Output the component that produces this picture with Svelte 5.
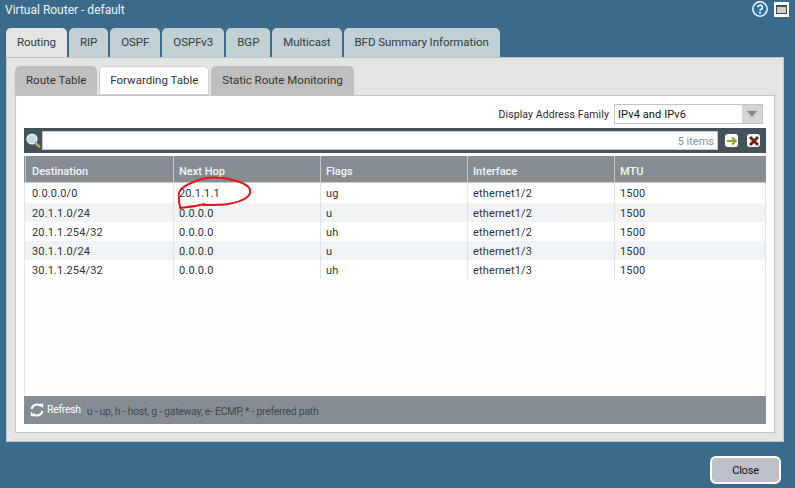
<script>
  const tabs = ['Routing', 'RIP', 'OSPF', 'OSPFv3', 'BGP', 'Multicast', 'BFD Summary Information'];
  const subtabs = ['Route Table', 'Forwarding Table', 'Static Route Monitoring'];
  const cols = ['Destination', 'Next Hop', 'Flags', 'Interface', 'MTU'];
  const rows = [
    ['0.0.0.0/0', '20.1.1.1', 'ug', 'ethernet1/2', '1500'],
    ['20.1.1.0/24', '0.0.0.0', 'u', 'ethernet1/2', '1500'],
    ['20.1.1.254/32', '0.0.0.0', 'uh', 'ethernet1/2', '1500'],
    ['30.1.1.0/24', '0.0.0.0', 'u', 'ethernet1/3', '1500'],
    ['30.1.1.254/32', '0.0.0.0', 'uh', 'ethernet1/3', '1500']
  ];
</script>

<div class="page">
  <header class="titlebar">
    <span class="title">Virtual Router - default</span>
    <div class="winicons">
      <svg width="16" height="16" viewBox="0 0 16 16">
        <circle cx="8" cy="8" r="7.2" fill="#2a6fb0" stroke="#fff" stroke-width="1.4"/>
        <path d="M5.8 6.3a2.3 2.1 0 1 1 3.4 1.8c-.8.5-1.2.8-1.2 1.7" fill="none" stroke="#fff" stroke-width="1.6"/>
        <rect x="7.1" y="10.8" width="1.8" height="1.8" fill="#fff"/>
      </svg>
      <svg width="15" height="15" viewBox="0 0 15 15">
        <rect width="15" height="15" fill="#fff"/>
        <rect x="2.5" y="3.5" width="10" height="8" fill="#c9ced2" stroke="#3f4d57"/>
        <rect x="2" y="3" width="11" height="2" fill="#3f4d57"/>
      </svg>
    </div>
  </header>

  <nav class="tabs">
    {#each tabs as t, i}
      <div class="tab" class:active={i === 0}>{t}</div>
    {/each}
  </nav>

  <section class="panel">
    <nav class="subtabs">
      {#each subtabs as t, i}
        <div class="subtab" class:active={i === 1}>{t}</div>
      {/each}
    </nav>
    <div class="content">
      <div class="family">
        <span>Display Address Family</span>
        <div class="select">
          <span class="selval">IPv4 and IPv6</span>
          <span class="selbtn"><i></i></span>
        </div>
      </div>

      <div class="tablewrap">
        <div class="toolbar">
          <svg class="search" width="15" height="16" viewBox="0 0 15 16">
            <circle cx="6" cy="6" r="4.8" fill="#bcdcf2" stroke="#e8f2f8" stroke-width="1.6"/>
            <path d="M9.6 9.8l3.6 3.8" stroke="#c9a46a" stroke-width="2.4" stroke-linecap="round"/>
          </svg>
          <div class="searchbox">5 items</div>
          <span class="toolbtn">
            <svg width="12" height="12" viewBox="0 0 12 12"><path d="M1 6h8M6 2.5L9.8 6 6 9.5" fill="none" stroke="#8fa524" stroke-width="2.2"/></svg>
          </span>
          <span class="toolbtn">
            <svg width="12" height="12" viewBox="0 0 12 12"><path d="M2 2l8 8M10 2l-8 8" stroke="#6e2a12" stroke-width="3"/></svg>
          </span>
        </div>

        <div class="thead">
          {#each cols as c}
            <div class="th">{c}</div>
          {/each}
        </div>

        <div class="tbody">
          {#each rows as r}
            <div class="tr">
              {#each r as cell}
                <div class="td">{cell}</div>
              {/each}
            </div>
          {/each}
          <svg class="scribble" width="76" height="36" viewBox="0 0 76 36">
            <path d="M2 32C1 27 0 22 1 18C2 14 5 12 9 10C15 7 21 4 29 3C38 2 47 3 55 5C63 7 71 10 72 15C73 19 71 21 68 23C62 27 56 28 50 29C44 30 35 30 27 30C24 31 27 29 27 29C20 31 10 32 2 33" fill="none" stroke="#e8141c" stroke-width="2" stroke-linecap="round"/>
          </svg>
        </div>

        <div class="tfoot">
          <svg width="14" height="14" viewBox="0 0 14 14">
            <path d="M1.6 6A5.5 5.5 0 0 1 11 3.2" fill="none" stroke="#fff" stroke-width="2"/>
            <path d="M9 .8h4.2v4.6z" fill="#fff"/>
            <path d="M12.4 8A5.5 5.5 0 0 1 3 10.8" fill="none" stroke="#fff" stroke-width="2"/>
            <path d="M5 13.2H.8V8.6z" fill="#fff"/>
          </svg>
          <span class="refresh">Refresh</span>
          <span class="legend">u - up, h - host, g - gateway, e- ECMP, * - preferred path</span>
        </div>
      </div>
    </div>
  </section>

  <footer class="actions">
    <button class="close">Close</button>
  </footer>
</div>

<style>
  :global(body) { margin: 0; background: #3c6a8a; }
  .page {
    width: 795px;
    height: 488px;
    overflow: hidden;
    background: #3c6a8a;
    font-family: Roboto, "Liberation Sans", Arial, sans-serif;
    font-size: 12px;
    color: #333;
    display: flex;
    flex-direction: column;
  }
  .titlebar {
    height: 28px;
    padding: 0 6px 8px 5px;
    box-sizing: border-box;
    display: flex;
    align-items: center;
    justify-content: space-between;
  }
  .title { color: #eef3f6; font-size: 12px; }
  .winicons { display: flex; align-items: center; gap: 6px; margin-top: -2px; }
  .tabs {
    display: flex;
    gap: 2px;
    padding-left: 6px;
    height: 29px;
  }
  .tab {
    background: #c1d1d3;
    border-radius: 5px 5px 0 0;
    padding: 0 11px;
    line-height: 29px;
    font-size: 11.5px;
    letter-spacing: -.06px;
    color: #2f3b42;
  }
  .tab.active { background: #e4e4e4; }
  .panel {
    margin-left: 6px;
    width: 778px;
    height: 385px;
    box-sizing: border-box;
    background: #e4e4e4;
    border: 1px solid #bfc3c5;
    padding: 8px;
    display: flex;
    flex-direction: column;
  }
  .subtabs { display: flex; gap: 2px; height: 29px; }
  .subtab {
    background: #bfbfbf;
    border-radius: 5px 5px 0 0;
    padding: 0 11px;
    line-height: 29px;
    font-size: 11.5px;
    color: #333;
  }
  .subtab.active { background: #fff; box-shadow: inset 0 0 0 1px #d0d0d0; }
  .content {
    flex: 1;
    background: #fff;
    border: 1px solid #c4c4c4;
    padding: 8px;
    display: flex;
    flex-direction: column;
    min-height: 0;
  }
  .family {
    display: flex;
    justify-content: flex-end;
    align-items: center;
    gap: 5px;
    height: 20px;
    margin-bottom: 4px;
    padding-right: 3px;
    color: #2c2c2c;
    font-size: 10.5px;
    letter-spacing: .1px;
  }
  .select {
    width: 149px;
    height: 20px;
    box-sizing: border-box;
    border: 1px solid #c4c4c4;
    display: flex;
    background: #fff;
  }
  .selval { flex: 1; padding-left: 3px; line-height: 19px; color: #111; font-size: 11px; }
  .selbtn {
    width: 20px;
    background: #d5d5d5;
    display: flex;
    align-items: center;
    justify-content: center;
  }
  .selbtn i {
    width: 0; height: 0;
    border-left: 5px solid transparent;
    border-right: 5px solid transparent;
    border-top: 6px solid #7e8a92;
  }
  .tablewrap {
    flex: 1;
    display: flex;
    flex-direction: column;
    min-height: 0;
    background: #fdfefe;
  }
  .toolbar {
    height: 25px;
    background: #44525c;
    display: flex;
    align-items: center;
    padding: 0 4px 0 2px;
    flex: none;
  }
  .search { margin-right: 1px; }
  .searchbox {
    flex: 1;
    height: 19px;
    box-sizing: border-box;
    background: #fff;
    border: 1px solid #c8c8c8;
    text-align: right;
    color: #8a8f93;
    font-size: 11px;
    line-height: 19px;
    padding-right: 3px;
    margin-right: 7px;
  }
  .toolbtn {
    width: 13px;
    height: 13px;
    background: #fff;
    border-radius: 3px;
    display: flex;
    align-items: center;
    justify-content: center;
    margin-right: 9px;
  }
  .toolbtn:last-child { margin-right: 2px; }
  .thead {
    margin-top: 3px;
    height: 27px;
    flex: none;
    display: grid;
    grid-template-columns: 149px 147px 147px 147px 1fr;
    background: #858d93;
    border-bottom: 1px solid #c8cdd0;
    box-sizing: border-box;
  }
  .th {
    color: #f4f6f7;
    font-size: 11px;
    font-weight: 500;
    line-height: 32px;
    padding-left: 5px;
    border-left: 1px solid #c6cbcf;
  }
  .th:first-child { margin-left: 1px; padding-left: 6px; }
  .tbody { flex: 1; position: relative; min-height: 0; border-left: 1px solid #e2e6e8; border-right: 1px solid #e2e6e8; }
  .tr {
    display: grid;
    grid-template-columns: 148px 147px 147px 147px 1fr;
    height: 19px;
    background: #fff;
  }
  .tr:first-child { height: 20px; }
  .tr:nth-child(even) { background: #f1f4f7; }
  .td {
    font-size: 11px;
    line-height: 22px;
    padding-left: 5px;
    color: #333;
    border-left: 1px solid #dfe3e6;
    letter-spacing: .15px;
    overflow: hidden;
  }
  .td:first-child { border-left: none; padding-left: 7px; }
  .scribble { position: absolute; left: 153px; top: -8px; }
  .tfoot {
    height: 28px;
    flex: none;
    background: #858d93;
    display: flex;
    align-items: center;
    padding-left: 6px;
  }
  .refresh { color: #fff; margin-left: 3px; font-size: 10.5px; letter-spacing: -.3px; position: relative; top: -1px; }
  .legend { color: #3c4a52; margin-left: 6px; font-size: 10.5px; letter-spacing: -.28px; position: relative; top: 1px; }
  .actions {
    display: flex;
    justify-content: flex-end;
    padding: 14px 14px 0 0;
  }
  .close {
    width: 71px;
    height: 28px;
    background: #bdc0c9;
    border: 2px solid #fff;
    border-radius: 6px;
    font: 11px Roboto, Arial, sans-serif;
    letter-spacing: -.2px;
    color: #111;
    padding: 0;
  }
</style>
